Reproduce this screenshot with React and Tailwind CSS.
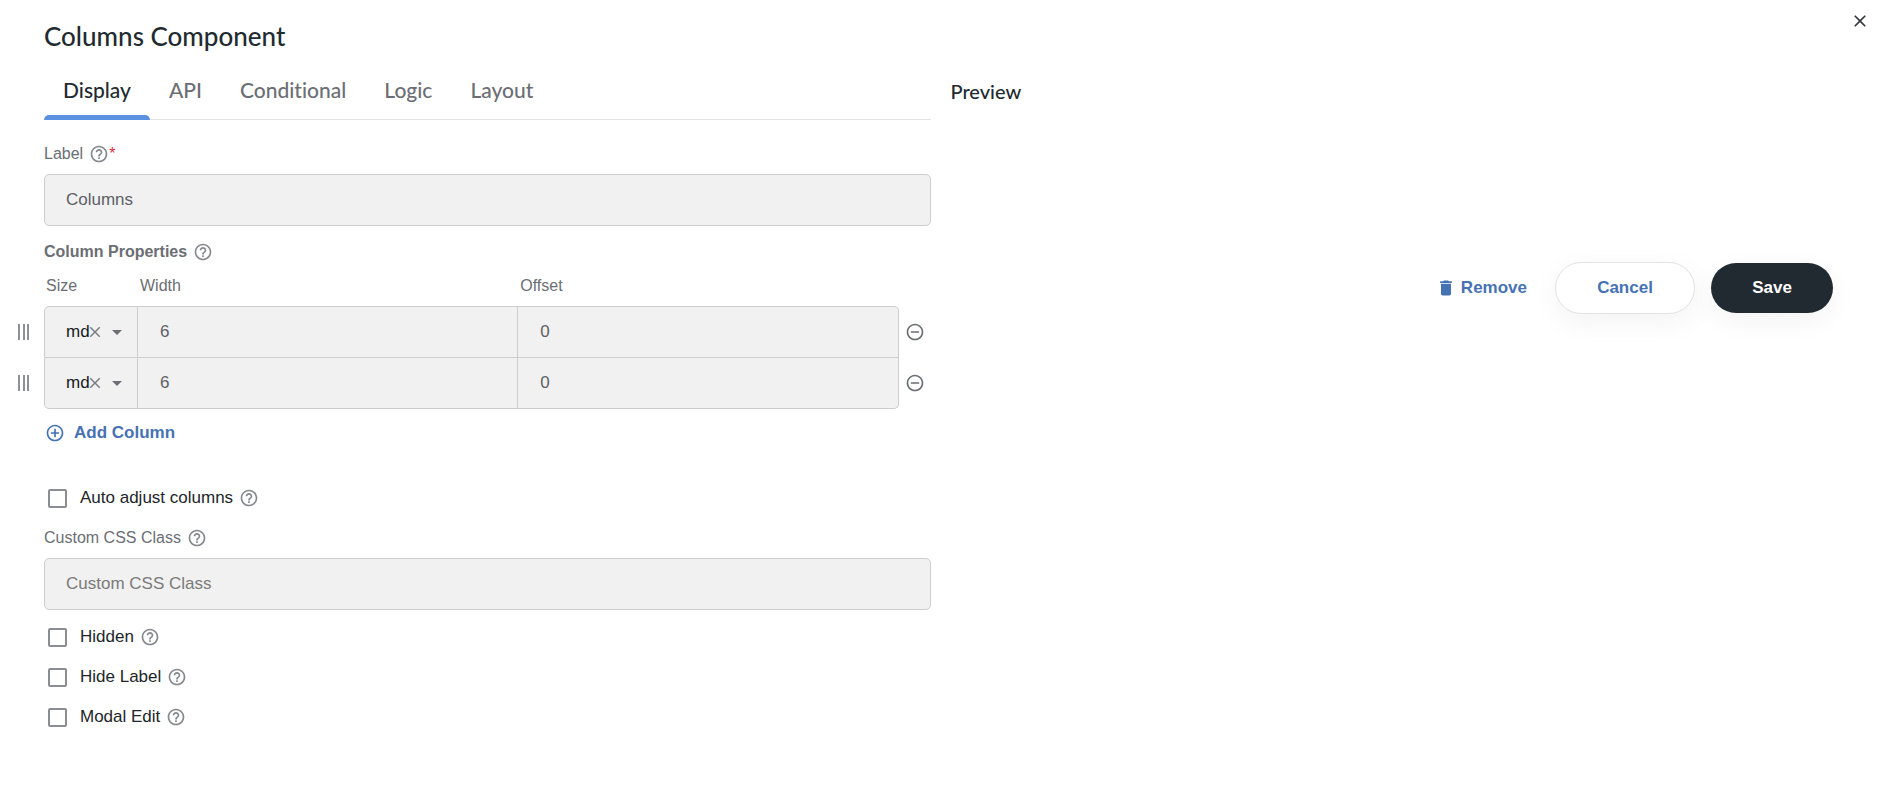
import React, { useState } from "react";
import {
  MdArrowDropDown,
  MdClose,
  MdDelete,
  MdHelpOutline,
  MdAddCircleOutline,
  MdRemoveCircleOutline,
} from "react-icons/md";

const tabs = ["Display", "API", "Conditional", "Logic", "Layout"];

function Help() {
  return <MdHelpOutline size={20} className="ml-1.5 shrink-0 text-[#85888d]" />;
}

function TextField({ id, label, required, ...rest }) {
  return (
    <div>
      <label htmlFor={id} className="flex h-5 items-center text-base text-[#6b6e74]">
        {label}
        <Help />
        {required && <span className="text-[#e02b3c]">*</span>}
      </label>
      <input
        id={id}
        type="text"
        className="mt-2.5 block h-[52px] w-full rounded-[5px] border border-[#cdcdcd] bg-[#f1f1f1] px-[21px] text-[17px] text-[#5d6066] outline-none placeholder:text-[#7a7a7a]"
        {...rest}
      />
    </div>
  );
}

function CheckField({ label }) {
  const [checked, setChecked] = useState(false);

  return (
    <label className="flex h-5 items-center text-[17px] text-[#212529]">
      <input
        type="checkbox"
        checked={checked}
        onChange={(e) => setChecked(e.target.checked)}
        className="ml-1 mr-[13px] h-[19px] w-[19px] shrink-0 appearance-none rounded-[2px] border-2 border-[#8a8d92] bg-white checked:bg-[#4672b4]"
      />
      {label}
      <Help />
    </label>
  );
}

function DragHandle() {
  return (
    <span className="flex h-4 w-[11px] shrink-0 cursor-move justify-between">
      <span className="w-0.5 bg-[#8d9094]" />
      <span className="w-0.5 bg-[#8d9094]" />
      <span className="w-0.5 bg-[#8d9094]" />
    </span>
  );
}

function ColumnRow({ column, onChange }) {
  const cell =
    "block h-[50px] w-full bg-transparent px-[22px] text-[17px] text-[#5d6066] outline-none";

  return (
    <tr>
      <td className="border border-[#cdcdcd] p-0">
        <div className="relative flex items-center">
          <select
            aria-label="Size"
            value={column.size}
            onChange={(e) => onChange({ ...column, size: e.target.value })}
            className="h-[50px] w-full appearance-none bg-transparent pl-[21px] text-[17px] text-[#171b1f] outline-none"
          >
            <option value="xs">xs</option>
            <option value="sm">sm</option>
            <option value="md">md</option>
            <option value="lg">lg</option>
            <option value="xl">xl</option>
          </select>
          <MdClose size={18} className="pointer-events-none absolute right-[33px] text-[#7b7e83]" />
          <MdArrowDropDown
            size={24}
            className="pointer-events-none absolute right-2 text-[#6b6e74]"
          />
        </div>
      </td>
      <td className="border border-[#cdcdcd] p-0">
        <input
          aria-label="Width"
          className={cell}
          value={column.width}
          onChange={(e) => onChange({ ...column, width: e.target.value })}
        />
      </td>
      <td className="border border-[#cdcdcd] p-0">
        <input
          aria-label="Offset"
          className={cell}
          value={column.offset}
          onChange={(e) => onChange({ ...column, offset: e.target.value })}
        />
      </td>
    </tr>
  );
}

function ColumnGrid() {
  const [columns, setColumns] = useState([
    { size: "md", width: "6", offset: "0" },
    { size: "md", width: "6", offset: "0" },
  ]);

  const updateColumn = (index, next) => {
    setColumns(columns.map((c, i) => (i === index ? next : c)));
  };

  return (
    <div>
      <div className="flex h-5 items-center text-base font-bold text-[#6b6e74]">
        Column Properties
        <Help />
      </div>
      <div className="-ml-[26px] mt-2.5 flex">
        {/* drag handles */}
        <div className="flex w-[26px] flex-col pt-[34px]">
          {columns.map((_, i) => (
            <div key={i} className="flex h-[51px] items-center">
              <DragHandle />
            </div>
          ))}
        </div>
        <div className="min-w-0 flex-1">
          <table className="w-full table-fixed border-separate border-spacing-0 text-left">
            <thead>
              <tr className="h-[34px] align-top text-base text-[#6b6e74] [&>th]:px-0.5 [&>th]:pt-0.5 [&>th]:font-normal">
                <th className="w-[94px]">Size</th>
                <th>Width</th>
                <th>Offset</th>
              </tr>
            </thead>
            <tbody className="[&_td]:bg-[#f1f1f1] [&>tr:first-child>td:first-child]:rounded-tl-[5px] [&>tr:first-child>td:last-child]:rounded-tr-[5px] [&>tr:last-child>td:first-child]:rounded-bl-[5px] [&>tr:last-child>td:last-child]:rounded-br-[5px] [&>tr:not(:first-child)>td]:border-t-0 [&_td:not(:first-child)]:border-l-0">
              {columns.map((column, i) => (
                <ColumnRow key={i} column={column} onChange={(next) => updateColumn(i, next)} />
              ))}
            </tbody>
          </table>
        </div>
        {/* remove buttons */}
        <div className="flex w-8 flex-col pt-[34px]">
          {columns.map((_, i) => (
            <div key={i} className="flex h-[51px] items-center pl-1.5">
              <button
                type="button"
                aria-label="Remove column"
                onClick={() => setColumns(columns.filter((_, n) => n !== i))}
                className="text-[#6b6e74]"
              >
                <MdRemoveCircleOutline size={20} />
              </button>
            </div>
          ))}
        </div>
      </div>
      <button
        type="button"
        onClick={() => setColumns([...columns, { size: "md", width: "6", offset: "0" }])}
        className="ml-px mt-3 flex h-6 items-center gap-[9px] text-[17px] font-bold text-[#4672b4]"
      >
        <MdAddCircleOutline size={20} />
        Add Column
      </button>
    </div>
  );
}

export default function App() {
  const [activeTab, setActiveTab] = useState("Display");

  return (
    <div className="relative min-h-screen bg-white px-11 pt-5 font-['Liberation_Sans',Arial,sans-serif] text-[#212529]">
      <button type="button" aria-label="Close" className="absolute right-[11px] top-[11px] text-[#34393e]">
        <MdClose size={20} />
      </button>

      <h1 className="font-[Lato,sans-serif] text-[26px] font-medium leading-8 text-[#222a31]">
        Columns Component
      </h1>

      <div className="grid grid-cols-2 gap-5">
        <div>
          <div
            role="tablist"
            className="mt-3 flex h-14 border-b border-[#e3e3e3] font-[Lato,sans-serif] [font-variant-ligatures:none]"
          >
            {tabs.map((tab) => (
              <button
                key={tab}
                type="button"
                role="tab"
                aria-selected={activeTab === tab}
                onClick={() => setActiveTab(tab)}
                className={`relative h-14 px-[19px] pb-1 text-[21px] font-medium ${
                  activeTab === tab ? "text-[#222a31]" : "text-[#6b6e74]"
                }`}
              >
                {tab}
                {activeTab === tab && (
                  <span className="absolute inset-x-0 bottom-0 h-[5px] rounded-t-[5px] bg-[#5b91e0]" />
                )}
              </button>
            ))}
          </div>

          <div className="mt-6">
            <TextField id="label" label="Label" required defaultValue="Columns" />
          </div>
          <div className="mt-4">
            <ColumnGrid />
          </div>
          <div className="mt-[43px]">
            <CheckField label="Auto adjust columns" />
          </div>
          <div className="mt-5">
            <TextField id="custom-class" label="Custom CSS Class" placeholder="Custom CSS Class" />
          </div>
          <div className="mt-[17px] flex flex-col gap-5">
            <CheckField label="Hidden" />
            <CheckField label="Hide Label" />
            <CheckField label="Modal Edit" />
          </div>
        </div>

        <div>
          <h2 className="mt-[27px] font-[Lato,sans-serif] text-xl font-medium leading-6 text-[#222a31]">
            Preview
          </h2>
          <div className="mr-1 mt-[159px] flex items-center justify-end text-[17px] font-bold">
            <button type="button" className="mr-7 flex items-center gap-[5px] text-[#4672b4]">
              <MdDelete size={20} />
              Remove
            </button>
            <button
              type="button"
              className="mr-4 h-[52px] w-[140px] rounded-full border border-[#e3e3e3] bg-white text-[#4672b4] shadow-[0_8px_30px_rgba(0,0,0,0.05)]"
            >
              Cancel
            </button>
            <button
              type="button"
              className="h-[50px] w-[122px] rounded-full bg-[#222a31] text-white shadow-[0_8px_30px_rgba(0,0,0,0.05)]"
            >
              Save
            </button>
          </div>
        </div>
      </div>
    </div>
  );
}
